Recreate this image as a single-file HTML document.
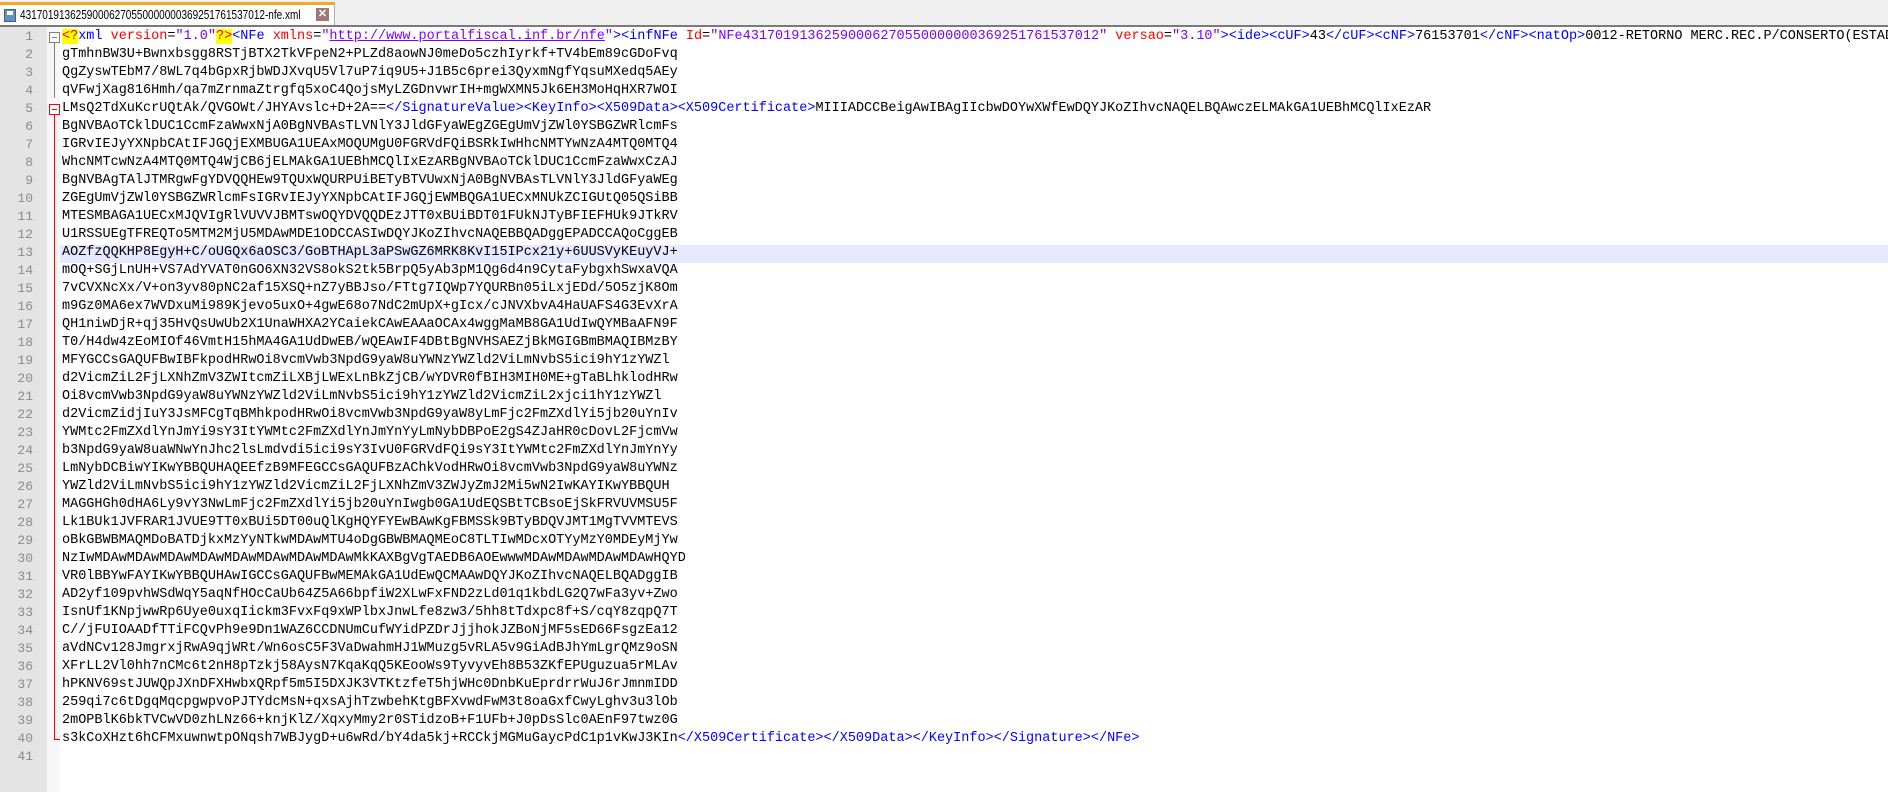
<!DOCTYPE html>
<html><head><meta charset="utf-8">
<style>
html,body{margin:0;padding:0;width:1888px;height:792px;overflow:hidden;background:#fff;font-family:"Liberation Sans",sans-serif}
#tabbar{position:absolute;left:0;top:0;width:1888px;height:25px;background:#f0f0f0}
#sep{position:absolute;left:0;top:25px;width:1888px;height:2px;background:#7a7a7a}
#tab{position:absolute;left:0;top:2px;width:335px;height:23px;background:#fff;border-top:3px solid #f5a623;border-right:1px solid #b0b0b0;box-sizing:border-box}
#tab .ic{position:absolute;left:4px;top:4px;width:12px;height:13px;background:#6a8fbf;border:1px solid #3b5f8f;box-sizing:border-box}
#tab .ic:after{content:"";position:absolute;left:2px;top:1px;width:6px;height:4px;background:#fff}
#tab .t{position:absolute;left:20px;top:2px;font-size:13px;color:#000;white-space:nowrap;transform:scaleX(0.77);transform-origin:0 0}
#tab .x{position:absolute;left:316px;top:3px;width:13px;height:13px;background:#a07878;color:#fff;font-size:11px;line-height:13px;text-align:center;font-weight:bold}
#margin{position:absolute;left:0;top:27px;width:47px;height:765px;background:#e4e4e4}
#fold{position:absolute;left:47px;top:27px;width:13px;height:765px;background:#f7f7f7}
#hl{position:absolute;left:60px;top:245px;width:1828px;height:18px;background:#e8e8ff}
.num{position:absolute;left:0;width:33px;text-align:right;font-family:"Liberation Mono",monospace;font-size:13px;color:#8a8a8a;height:18px;line-height:18px}
.ln{position:absolute;left:62px;font-family:"Liberation Mono",monospace;font-size:13.5px;height:18px;line-height:18px;white-space:pre;color:#000}
.b{color:#0000ff}.r{color:#ff0000}.v{color:#8000ff}.y{background:#ffff00;color:#ff0000}
.u{color:#8000ff;text-decoration:underline}
.box{position:absolute;width:9px;height:9px;border:1px solid #808080;background:#fff}
.box:after{content:"";position:absolute;left:2px;top:4px;width:5px;height:1px;background:#808080}
.box.red{border-color:#ff0000}.box.red:after{background:#ff0000}
</style></head><body>
<div id="tabbar"><div id="tab"><div class="ic"></div><div class="t">43170191362590006270550000000369251761537012-nfe.xml</div><div class="x">✕</div></div></div>
<div id="sep"></div>
<div id="margin"></div>
<div id="fold"></div>
<div id="hl"></div>
<div style="position:absolute;left:54px;top:42px;width:1px;height:56px;background:#808080"></div>
<div style="position:absolute;left:54px;top:114px;width:1px;height:625px;background:#ff0000"></div>
<div style="position:absolute;left:54px;top:739px;width:6px;height:1px;background:#ff0000"></div>
<div class="box" style="left:49px;top:32px"></div>
<div class="box red" style="left:49px;top:104px"></div>
<div id="code">
<div class="ln" style="top:28px"><span class="y">&lt;?</span><span class="b">xml</span> <span class="r">version</span>=<span class="v">"1.0"</span><span class="y">?&gt;</span><span class="b">&lt;NFe</span> <span class="r">xmlns</span>=<span class="v">"</span><span class="u">http://www.portalfiscal.inf.br/nfe</span><span class="v">"</span><span class="b">&gt;&lt;infNFe</span> <span class="r">Id</span>=<span class="v">"NFe43170191362590006270550000000369251761537012"</span> <span class="r">versao</span>=<span class="v">"3.10"</span><span class="b">&gt;&lt;ide&gt;&lt;cUF&gt;</span>43<span class="b">&lt;/cUF&gt;&lt;cNF&gt;</span>76153701<span class="b">&lt;/cNF&gt;&lt;natOp&gt;</span>0012-RETORNO MERC.REC.P/CONSERTO(ESTADO)-</div>
<div class="ln" style="top:46px">gTmhnBW3U+Bwnxbsgg8RSTjBTX2TkVFpeN2+PLZd8aowNJ0meDo5czhIyrkf+TV4bEm89cGDoFvq</div>
<div class="ln" style="top:64px">QgZyswTEbM7/8WL7q4bGpxRjbWDJXvqU5Vl7uP7iq9U5+J1B5c6prei3QyxmNgfYqsuMXedq5AEy</div>
<div class="ln" style="top:82px">qVFwjXag816Hmh/qa7mZrnmaZtrgfq5xoC4QojsMyLZGDnvwrIH+mgWXMN5Jk6EH3MoHqHXR7WOI</div>
<div class="ln" style="top:100px">LMsQ2TdXuKcrUQtAk/QVGOWt/JHYAvslc+D+2A==<span class="b">&lt;/SignatureValue&gt;&lt;KeyInfo&gt;&lt;X509Data&gt;&lt;X509Certificate&gt;</span>MIIIADCCBeigAwIBAgIIcbwDOYwXWfEwDQYJKoZIhvcNAQELBQAwczELMAkGA1UEBhMCQlIxEzAR</div>
<div class="ln" style="top:118px">BgNVBAoTCklDUC1CcmFzaWwxNjA0BgNVBAsTLVNlY3JldGFyaWEgZGEgUmVjZWl0YSBGZWRlcmFs</div>
<div class="ln" style="top:136px">IGRvIEJyYXNpbCAtIFJGQjEXMBUGA1UEAxMOQUMgU0FGRVdFQiBSRkIwHhcNMTYwNzA4MTQ0MTQ4</div>
<div class="ln" style="top:154px">WhcNMTcwNzA4MTQ0MTQ4WjCB6jELMAkGA1UEBhMCQlIxEzARBgNVBAoTCklDUC1CcmFzaWwxCzAJ</div>
<div class="ln" style="top:172px">BgNVBAgTAlJTMRgwFgYDVQQHEw9TQUxWQURPUiBETyBTVUwxNjA0BgNVBAsTLVNlY3JldGFyaWEg</div>
<div class="ln" style="top:190px">ZGEgUmVjZWl0YSBGZWRlcmFsIGRvIEJyYXNpbCAtIFJGQjEWMBQGA1UECxMNUkZCIGUtQ05QSiBB</div>
<div class="ln" style="top:208px">MTESMBAGA1UECxMJQVIgRlVUVVJBMTswOQYDVQQDEzJTT0xBUiBDT01FUkNJTyBFIEFHUk9JTkRV</div>
<div class="ln" style="top:226px">U1RSSUEgTFREQTo5MTM2MjU5MDAwMDE1ODCCASIwDQYJKoZIhvcNAQEBBQADggEPADCCAQoCggEB</div>
<div class="ln" style="top:244px">AOZfzQQKHP8EgyH+C/oUGQx6aOSC3/GoBTHApL3aPSwGZ6MRK8KvI15IPcx21y+6UUSVyKEuyVJ+</div>
<div class="ln" style="top:262px">mOQ+SGjLnUH+VS7AdYVAT0nGO6XN32VS8okS2tk5BrpQ5yAb3pM1Qg6d4n9CytaFybgxhSwxaVQA</div>
<div class="ln" style="top:280px">7vCVXNcXx/V+on3yv80pNC2af15XSQ+nZ7yBBJso/FTtg7IQWp7YQURBn05iLxjEDd/5O5zjK8Om</div>
<div class="ln" style="top:298px">m9Gz0MA6ex7WVDxuMi989Kjevo5uxO+4gwE68o7NdC2mUpX+gIcx/cJNVXbvA4HaUAFS4G3EvXrA</div>
<div class="ln" style="top:316px">QH1niwDjR+qj35HvQsUwUb2X1UnaWHXA2YCaiekCAwEAAaOCAx4wggMaMB8GA1UdIwQYMBaAFN9F</div>
<div class="ln" style="top:334px">T0/H4dw4zEoMIOf46VmtH15hMA4GA1UdDwEB/wQEAwIF4DBtBgNVHSAEZjBkMGIGBmBMAQIBMzBY</div>
<div class="ln" style="top:352px">MFYGCCsGAQUFBwIBFkpodHRwOi8vcmVwb3NpdG9yaW8uYWNzYWZld2ViLmNvbS5ici9hY1zYWZl</div>
<div class="ln" style="top:370px">d2VicmZiL2FjLXNhZmV3ZWItcmZiLXBjLWExLnBkZjCB/wYDVR0fBIH3MIH0ME+gTaBLhklodHRw</div>
<div class="ln" style="top:388px">Oi8vcmVwb3NpdG9yaW8uYWNzYWZld2ViLmNvbS5ici9hY1zYWZld2VicmZiL2xjci1hY1zYWZl</div>
<div class="ln" style="top:406px">d2VicmZidjIuY3JsMFCgTqBMhkpodHRwOi8vcmVwb3NpdG9yaW8yLmFjc2FmZXdlYi5jb20uYnIv</div>
<div class="ln" style="top:424px">YWMtc2FmZXdlYnJmYi9sY3ItYWMtc2FmZXdlYnJmYnYyLmNybDBPoE2gS4ZJaHR0cDovL2FjcmVw</div>
<div class="ln" style="top:442px">b3NpdG9yaW8uaWNwYnJhc2lsLmdvdi5ici9sY3IvU0FGRVdFQi9sY3ItYWMtc2FmZXdlYnJmYnYy</div>
<div class="ln" style="top:460px">LmNybDCBiwYIKwYBBQUHAQEEfzB9MFEGCCsGAQUFBzAChkVodHRwOi8vcmVwb3NpdG9yaW8uYWNz</div>
<div class="ln" style="top:478px">YWZld2ViLmNvbS5ici9hY1zYWZld2VicmZiL2FjLXNhZmV3ZWJyZmJ2Mi5wN2IwKAYIKwYBBQUH</div>
<div class="ln" style="top:496px">MAGGHGh0dHA6Ly9vY3NwLmFjc2FmZXdlYi5jb20uYnIwgb0GA1UdEQSBtTCBsoEjSkFRVUVMSU5F</div>
<div class="ln" style="top:514px">Lk1BUk1JVFRAR1JVUE9TT0xBUi5DT00uQlKgHQYFYEwBAwKgFBMSSk9BTyBDQVJMT1MgTVVMTEVS</div>
<div class="ln" style="top:532px">oBkGBWBMAQMDoBATDjkxMzYyNTkwMDAwMTU4oDgGBWBMAQMEoC8TLTIwMDcxOTYyMzY0MDEyMjYw</div>
<div class="ln" style="top:550px">NzIwMDAwMDAwMDAwMDAwMDAwMDAwMDAwMDAwMkKAXBgVgTAEDB6AOEwwwMDAwMDAwMDAwMDAwHQYD</div>
<div class="ln" style="top:568px">VR0lBBYwFAYIKwYBBQUHAwIGCCsGAQUFBwMEMAkGA1UdEwQCMAAwDQYJKoZIhvcNAQELBQADggIB</div>
<div class="ln" style="top:586px">AD2yf109pvhWSdWqY5aqNfHOcCaUb64Z5A66bpfiW2XLwFxFND2zLd01q1kbdLG2Q7wFa3yv+Zwo</div>
<div class="ln" style="top:604px">IsnUf1KNpjwwRp6Uye0uxqIickm3FvxFq9xWPlbxJnwLfe8zw3/5hh8tTdxpc8f+S/cqY8zqpQ7T</div>
<div class="ln" style="top:622px">C//jFUIOAADfTTiFCQvPh9e9Dn1WAZ6CCDNUmCufWYidPZDrJjjhokJZBoNjMF5sED66FsgzEa12</div>
<div class="ln" style="top:640px">aVdNCv128JmgrxjRwA9qjWRt/Wn6osC5F3VaDwahmHJ1WMuzg5vRLA5v9GiAdBJhYmLgrQMz9oSN</div>
<div class="ln" style="top:658px">XFrLL2Vl0hh7nCMc6t2nH8pTzkj58AysN7KqaKqQ5KEooWs9TyvyvEh8B53ZKfEPUguzua5rMLAv</div>
<div class="ln" style="top:676px">hPKNV69stJUWQpJXnDFXHwbxQRpf5m5I5DXJK3VTKtzfeT5hjWHc0DnbKuEprdrrWuJ6rJmnmIDD</div>
<div class="ln" style="top:694px">259qi7c6tDgqMqcpgwpvoPJTYdcMsN+qxsAjhTzwbehKtgBFXvwdFwM3t8oaGxfCwyLghv3u3lOb</div>
<div class="ln" style="top:712px">2mOPBlK6bkTVCwVD0zhLNz66+knjKlZ/XqxyMmy2r0STidzoB+F1UFb+J0pDsSlc0AEnF97twz0G</div>
<div class="ln" style="top:730px">s3kCoXHzt6hCFMxuwnwtpONqsh7WBJygD+u6wRd/bY4da5kj+RCCkjMGMuGaycPdC1p1vKwJ3KIn<span class="b">&lt;/X509Certificate&gt;&lt;/X509Data&gt;&lt;/KeyInfo&gt;&lt;/Signature&gt;&lt;/NFe&gt;</span></div>
</div>
<div style="position:absolute;left:0;top:28px">
<div class="num" style="top:0">1</div><div class="num" style="top:18px">2</div><div class="num" style="top:36px">3</div><div class="num" style="top:54px">4</div><div class="num" style="top:72px">5</div><div class="num" style="top:90px">6</div><div class="num" style="top:108px">7</div><div class="num" style="top:126px">8</div><div class="num" style="top:144px">9</div><div class="num" style="top:162px">10</div><div class="num" style="top:180px">11</div><div class="num" style="top:198px">12</div><div class="num" style="top:216px">13</div><div class="num" style="top:234px">14</div><div class="num" style="top:252px">15</div><div class="num" style="top:270px">16</div><div class="num" style="top:288px">17</div><div class="num" style="top:306px">18</div><div class="num" style="top:324px">19</div><div class="num" style="top:342px">20</div><div class="num" style="top:360px">21</div><div class="num" style="top:378px">22</div><div class="num" style="top:396px">23</div><div class="num" style="top:414px">24</div><div class="num" style="top:432px">25</div><div class="num" style="top:450px">26</div><div class="num" style="top:468px">27</div><div class="num" style="top:486px">28</div><div class="num" style="top:504px">29</div><div class="num" style="top:522px">30</div><div class="num" style="top:540px">31</div><div class="num" style="top:558px">32</div><div class="num" style="top:576px">33</div><div class="num" style="top:594px">34</div><div class="num" style="top:612px">35</div><div class="num" style="top:630px">36</div><div class="num" style="top:648px">37</div><div class="num" style="top:666px">38</div><div class="num" style="top:684px">39</div><div class="num" style="top:702px">40</div><div class="num" style="top:720px">41</div>
</div>
</body></html>
